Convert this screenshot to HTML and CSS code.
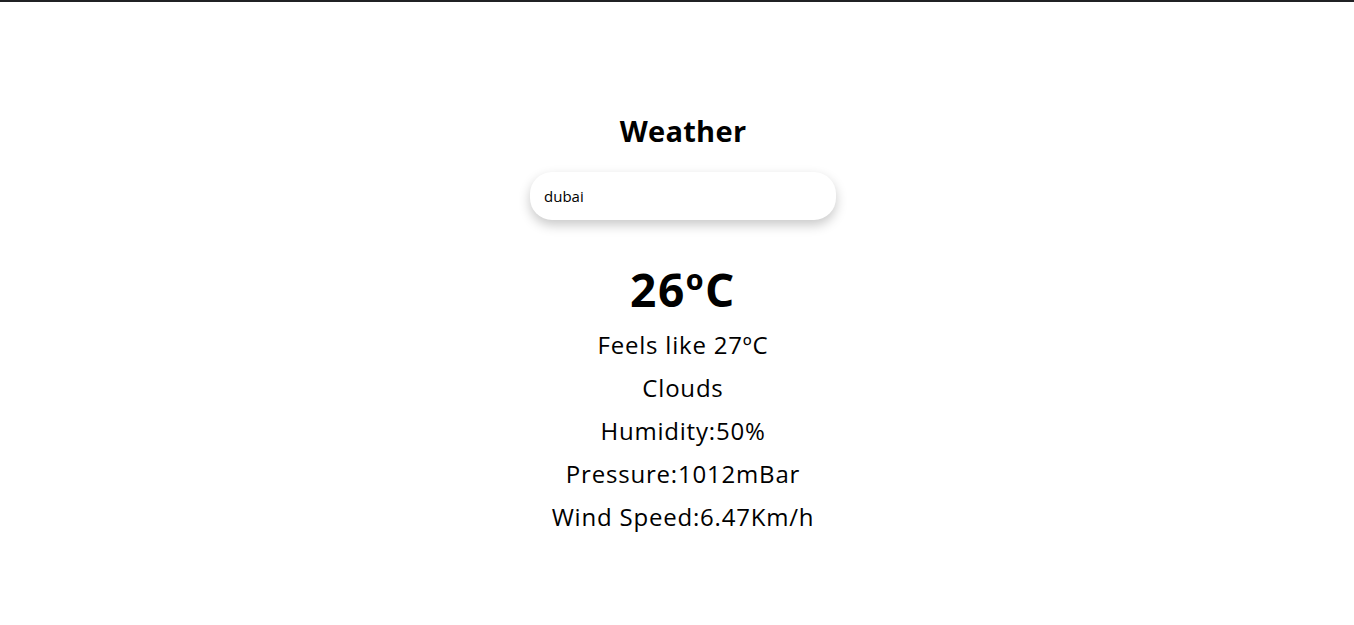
FILE: index.html
```html
<!DOCTYPE html>
<html>
<head>
<meta charset="utf-8">
<link rel="stylesheet" href="styles.css">
</head>
<body>
<main class="app">
  <h1 class="title">Weather</h1>
  <input class="search" type="text" value="dubai">
  <div class="temp">26ºC</div>
  <ul class="details">
    <li>Feels like 27ºC</li>
    <li>Clouds</li>
    <li>Humidity:50%</li>
    <li>Pressure:1012mBar</li>
    <li>Wind Speed:6.47Km/h</li>
  </ul>
</main>
</body>
</html>
```
FILE: styles.css
```css
html, body {
  margin: 0;
  background: #fff;
}
body {
  border-top: 2px solid #202124;
  font-family: "Open Sans", "Liberation Sans", sans-serif;
  color: #000;
}
.app {
  display: flex;
  flex-direction: column;
  align-items: center;
  padding-top: 112px;
  padding-left: 12px;
}
.title {
  margin: 0;
  font-size: 29px;
  line-height: 34px;
  font-weight: 700;
  letter-spacing: 0.3px;
}
.search {
  margin-top: 24px;
  box-sizing: border-box;
  width: 306px;
  height: 48px;
  border: none;
  outline: none;
  border-radius: 22px;
  padding: 0 14px;
  font-family: inherit;
  font-size: 15px;
  color: #000;
  background: #fff;
  box-shadow: 0 5px 12px rgba(0,0,0,0.22);
}
.temp {
  margin-top: 43px;
  font-size: 46px;
  line-height: 52px;
  font-weight: 700;
  letter-spacing: 1.5px;
}
.details {
  list-style: none;
  margin: 8px 0 0;
  padding: 0;
  text-align: center;
}
.details li {
  font-size: 24px;
  line-height: 43px;
  letter-spacing: 0.8px;
}
```
